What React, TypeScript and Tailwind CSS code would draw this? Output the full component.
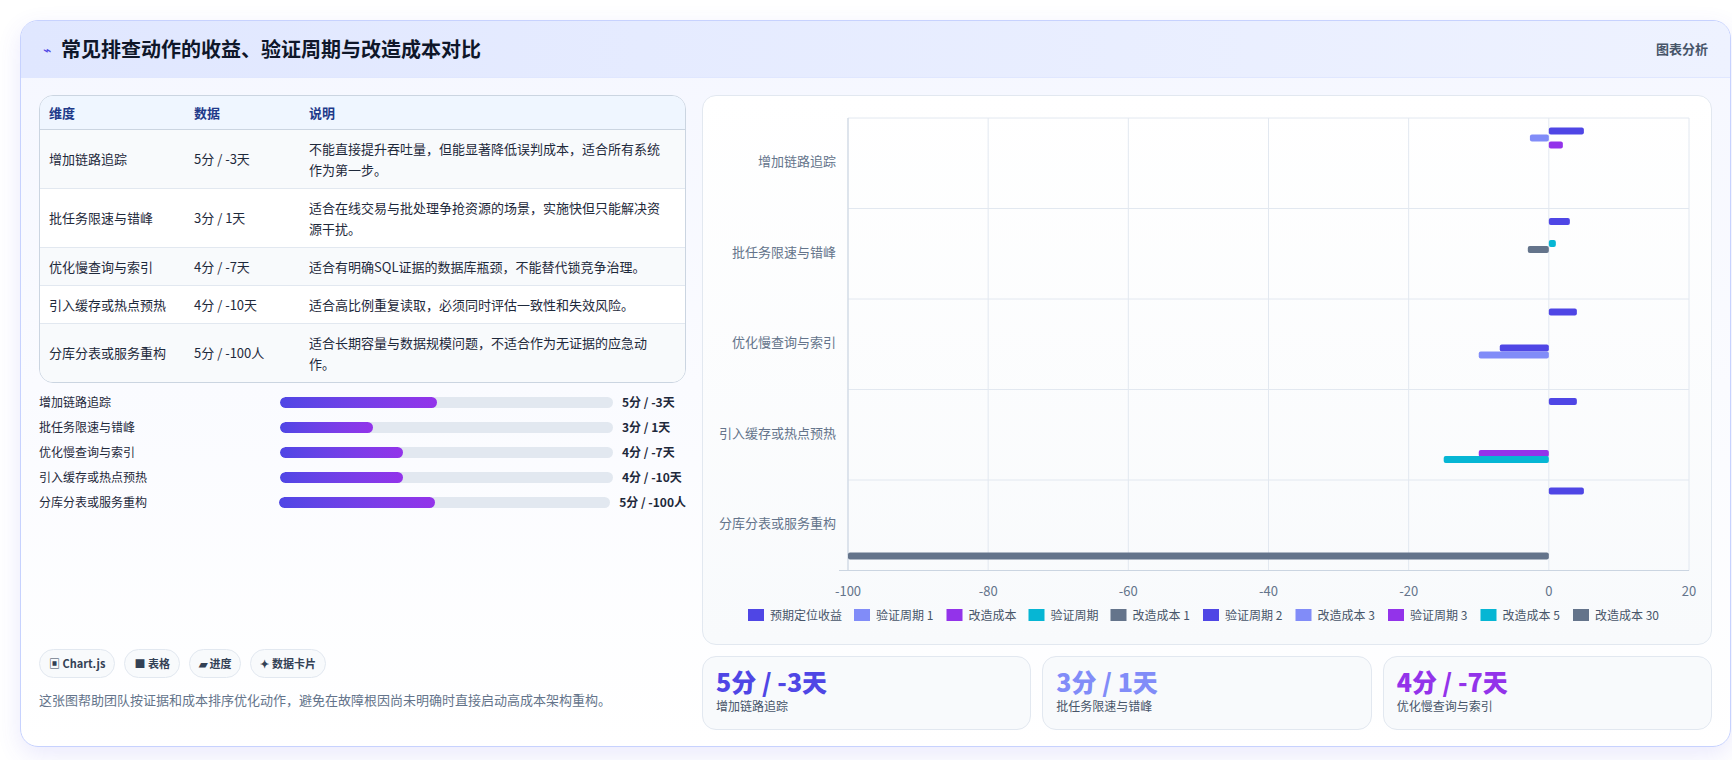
import React from "react";

const F = { fontFamily: '"Noto Sans CJK SC","Noto Sans",sans-serif' };

const rows = [
  ["增加链路追踪", "5分 / -3天", "不能直接提升吞吐量，但能显著降低误判成本，适合所有系统作为第一步。"],
  ["批任务限速与错峰", "3分 / 1天", "适合在线交易与批处理争抢资源的场景，实施快但只能解决资源干扰。"],
  ["优化慢查询与索引", "4分 / -7天", "适合有明确SQL证据的数据库瓶颈，不能替代锁竞争治理。"],
  ["引入缓存或热点预热", "4分 / -10天", "适合高比例重复读取，必须同时评估一致性和失效风险。"],
  ["分库分表或服务重构", "5分 / -100人", "适合长期容量与数据规模问题，不适合作为无证据的应急动作。"],
];
const prog = [47, 28, 37, 37, 47];

const C = { b: "#4f46e5", l: "#818cf8", p: "#9333ea", c: "#06b6d4", g: "#64748b" };
const bars: [number, number, number, string][] = [
  [0, 13, 5, C.b], [0, 20, -2.7, C.l], [0, 27, 2, C.p],
  [1, 13, 3, C.b], [1, 35, 1, C.c], [1, 41, -3, C.g],
  [2, 13, 4, C.b], [2, 49, -7, C.b], [2, 56, -10, C.l],
  [3, 12, 4, C.b], [3, 64, -10, C.p], [3, 70, -15, C.c],
  [4, 11, 5, C.b], [4, 76, -100, C.g],
];
const legend: [string, string][] = [
  ["预期定位收益", C.b], ["验证周期 1", C.l], ["改造成本", C.p], ["验证周期", C.c], ["改造成本 1", C.g],
  ["验证周期 2", C.b], ["改造成本 3", C.l], ["验证周期 3", C.p], ["改造成本 5", C.c], ["改造成本 30", C.g],
];

function tw(s: string) {
  let w = 0;
  for (const ch of s) w += /[\u4e00-\u9fff]/.test(ch) ? 12 : ch === " " ? 3.5 : 7;
  return w;
}

function Chart() {
  const x0 = 145, x1 = 986, y0 = 22, rh = 90.5;
  const sx = (v: number) => x0 + ((v + 100) / 120) * (x1 - x0);
  const ticks = [-100, -80, -60, -40, -20, 0, 20];
  let lx = 45;
  return (
    <svg width="1010" height="548" style={F}>
      {ticks.map((t) => (
        <line key={t} x1={sx(t)} x2={sx(t)} y1={y0} y2={y0 + rh * 5} stroke="#e2e8f0" />
      ))}
      {[0, 1, 2, 3, 4].map((i) => (
        <line key={i} x1={x0} x2={x1} y1={y0 + rh * i} y2={y0 + rh * i} stroke="#e2e8f0" />
      ))}
      <line x1={x0 - 9} x2={x1} y1={y0 + rh * 5} y2={y0 + rh * 5} stroke="#cbd5e1" />
      <line x1={x0} x2={x0} y1={y0} y2={y0 + rh * 5} stroke="#cbd5e1" />
      {rows.map((r, i) => (
        <text key={i} x={x0 - 12} y={y0 + rh * i + 48} textAnchor="end" fontSize="13" fill="#64748b">{r[0]}</text>
      ))}
      {bars.map(([r, o, v, c], i) => {
        const a = sx(Math.min(0, v)), b = sx(Math.max(0, v));
        return <rect key={i} x={a} y={y0 + rh * r + o - 3.5} width={b - a} height={7} rx={2} fill={c} />;
      })}
      {ticks.map((t) => (
        <text key={t} x={sx(t)} y={y0 + rh * 5 + 25} textAnchor="middle" fontSize="13" fill="#64748b">{t}</text>
      ))}
      {legend.map(([n, c], i) => {
        const x = lx;
        lx += 16 + 6 + tw(n) + 12;
        return (
          <g key={i}>
            <rect x={x} y={513} width={16} height={12} fill={c} />
            <text x={x + 22} y={524} fontSize="12" fill="#475569">{n}</text>
          </g>
        );
      })}
    </svg>
  );
}

export default function App() {
  return (
    <div className="w-[1732px] h-[760px] bg-white pt-[20px] pl-[20px]" style={F}>
      <div className="w-[1711px] h-[727px] rounded-[18px] border border-[#c7d2fe] bg-gradient-to-b from-[#f5f7ff] to-white shadow-[0_8px_24px_rgba(79,70,229,0.12)] overflow-hidden">
        <div className="h-[57px] flex items-center justify-between px-[22px] bg-gradient-to-r from-[#e0e7ff] to-[#eef2ff] border-b border-[#e0e7ff]">
          <div className="flex items-center gap-[10px]">
            <span className="text-[#4f46e5] text-sm">⌁</span>
            <span className="text-[20px] font-bold text-[#0f172a]">常见排查动作的收益、验证周期与改造成本对比</span>
          </div>
          <span className="text-[13px] text-[#475569] font-semibold">图表分析</span>
        </div>
        <div className="flex gap-[16px] px-[18px] pt-[17px]">
          <div className="w-[647px] h-[634px] flex flex-col">
            <div className="rounded-[14px] border border-[#cbd5e1] overflow-hidden text-[13px] text-[#1e293b]">
              <div className="flex h-[34px] items-center bg-[#eff6ff] text-[#1e3a8a] font-semibold border-b border-[#cbd5e1]">
                <div className="w-[154px] pl-[9px]">维度</div><div className="w-[115px]">数据</div><div>说明</div>
              </div>
              {rows.map((r, i) => (
                <div key={i} className={`flex items-center py-[8px] border-b border-[#e2e8f0] last:border-b-0 ${i % 2 ? "bg-white" : "bg-[#f8fafc]"}`}>
                  <div className="w-[154px] pl-[9px] shrink-0">{r[0]}</div>
                  <div className="w-[115px] shrink-0">{r[1]}</div>
                  <div className="pr-[14px] leading-[21px]">{r[2]}</div>
                </div>
              ))}
            </div>
            <div className="flex flex-col gap-[7px] mt-[10px] text-[12px] text-[#1e293b]">
              {rows.map((r, i) => (
                <div key={i} className="flex items-center h-[18px]">
                  <div className="w-[241px]">{r[0]}</div>
                  <div className="w-[333px] h-[11px] rounded-full bg-[#e2e8f0] overflow-hidden">
                    <div className="h-full rounded-full bg-gradient-to-r from-[#4f46e5] to-[#9333ea]" style={{ width: `${prog[i]}%` }} />
                  </div>
                  <div className="ml-[9px] font-bold whitespace-nowrap">{r[1]}</div>
                </div>
              ))}
            </div>
            <div className="flex-1" />
            <div className="flex gap-[9px] text-[11px] font-semibold text-[#334155]">
              {["▣ Chart.js", "■ 表格", "▰ 进度", "✦ 数据卡片"].map((c) => (
                <span key={c} className="px-[9px] py-[5px] rounded-full border border-[#e2e8f0] bg-[#f8fafc]">{c}</span>
              ))}
            </div>
            <div className="text-[13px] text-[#64748b] mt-[12px] mb-[20px]">这张图帮助团队按证据和成本排序优化动作，避免在故障根因尚未明确时直接启动高成本架构重构。</div>
          </div>
          <div className="w-[1010px] flex flex-col gap-[11px]">
            <div className="h-[550px] rounded-[14px] border border-[#e2e8f0] bg-gradient-to-b from-white to-[#f8fafc] overflow-hidden">
              <Chart />
            </div>
            <div className="grid grid-cols-3 gap-[11px]">
              {[["5分 / -3天", "增加链路追踪", "text-[#4f46e5]"], ["3分 / 1天", "批任务限速与错峰", "text-[#818cf8]"], ["4分 / -7天", "优化慢查询与索引", "text-[#9333ea]"]].map(([v, l, c]) => (
                <div key={l} className="h-[74px] rounded-[14px] border border-[#e2e8f0] bg-[#f8fafc] px-[13px] pt-[9px]">
                  <div className={`text-[25px] font-extrabold leading-[31px] ${c}`}>{v}</div>
                  <div className="text-[12px] text-[#475569]">{l}</div>
                </div>
              ))}
            </div>
          </div>
        </div>
      </div>
    </div>
  );
}
